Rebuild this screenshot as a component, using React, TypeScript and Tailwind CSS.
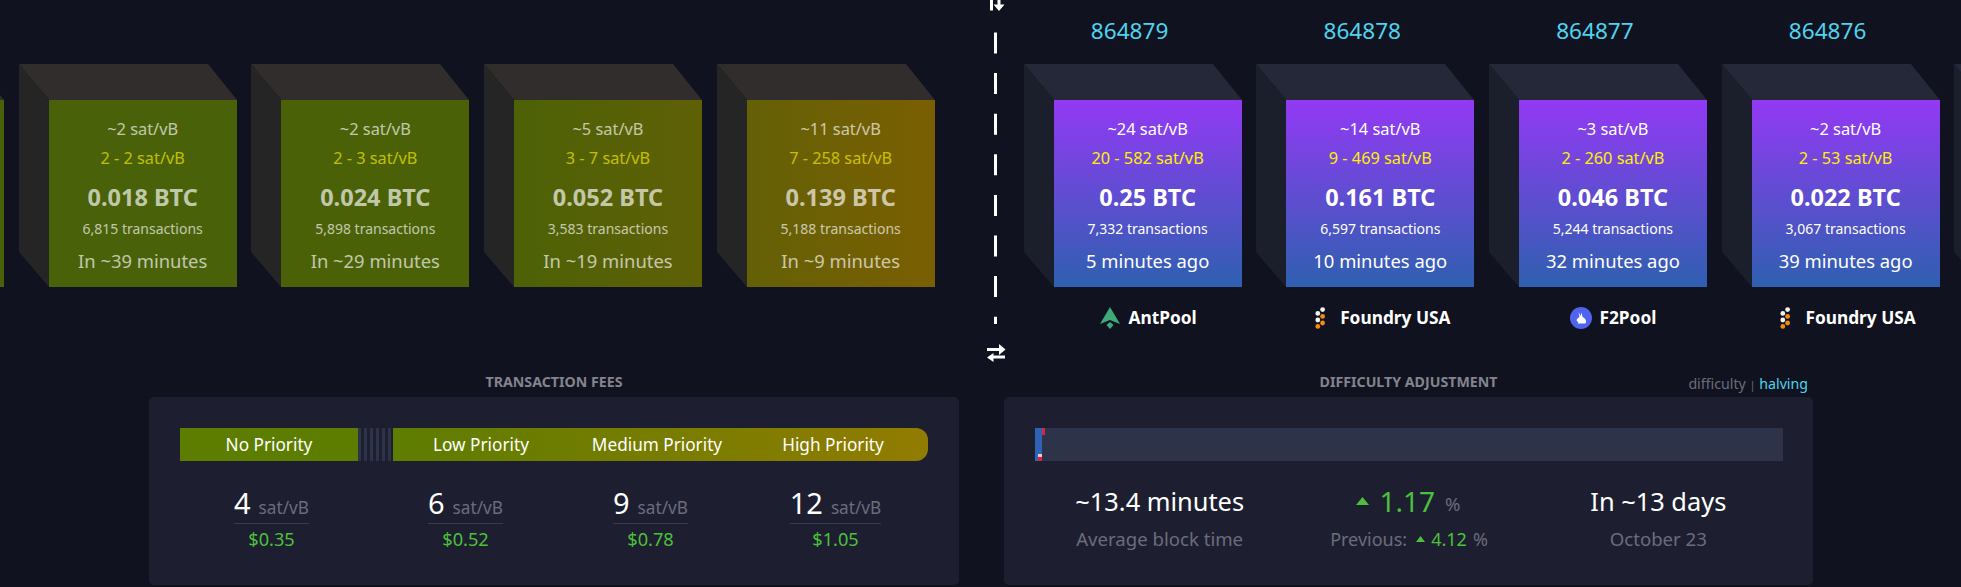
const mempoolBlocks = [
  { key: "next-5", front: "bg-[#496109]" },
  { key: "next-4", front: "bg-[#496109]", fee: "~2 sat/vB", range: "2 - 2 sat/vB", btc: "0.018 BTC", txs: "6,815 transactions", time: "In ~39 minutes" },
  { key: "next-3", front: "bg-[#4a6107]", fee: "~2 sat/vB", range: "2 - 3 sat/vB", btc: "0.024 BTC", txs: "5,898 transactions", time: "In ~29 minutes" },
  { key: "next-2", front: "bg-[linear-gradient(90deg,#4d6106,#5f6006)]", fee: "~5 sat/vB", range: "3 - 7 sat/vB", btc: "0.052 BTC", txs: "3,583 transactions", time: "In ~19 minutes" },
  { key: "next-1", front: "bg-[linear-gradient(90deg,#646006,#7a5f02)]", fee: "~11 sat/vB", range: "7 - 258 sat/vB", btc: "0.139 BTC", txs: "5,188 transactions", time: "In ~9 minutes" },
];

const minedBlocks = [
  { height: "864879", fee: "~24 sat/vB", range: "20 - 582 sat/vB", btc: "0.25 BTC", txs: "7,332 transactions", time: "5 minutes ago", pool: "AntPool" },
  { height: "864878", fee: "~14 sat/vB", range: "9 - 469 sat/vB", btc: "0.161 BTC", txs: "6,597 transactions", time: "10 minutes ago", pool: "Foundry USA" },
  { height: "864877", fee: "~3 sat/vB", range: "2 - 260 sat/vB", btc: "0.046 BTC", txs: "5,244 transactions", time: "32 minutes ago", pool: "F2Pool" },
  { height: "864876", fee: "~2 sat/vB", range: "2 - 53 sat/vB", btc: "0.022 BTC", txs: "3,067 transactions", time: "39 minutes ago", pool: "Foundry USA" },
];

const fees = [
  { rate: "4", usd: "$0.35" },
  { rate: "6", usd: "$0.52" },
  { rate: "9", usd: "$0.78" },
  { rate: "12", usd: "$1.05" },
];

function PoolIcon({ pool }: { pool: string }) {
  if (pool === "AntPool") {
    return (
      <svg width="22" height="22" viewBox="0 0 22 22" fill="#3fa97b">
        <path d="M11 0 L21 17 L11 13 L1 17 Z" />
        <path d="M11 15 L14.5 18 L11 22 L7.5 18 Z" />
      </svg>
    );
  }
  if (pool === "F2Pool") {
    return (
      <svg width="22" height="22" viewBox="0 0 22 22">
        <circle cx="11" cy="11" r="11" fill="#4f63ee" />
        <path d="M8.5 5 L10.5 9 L11.5 5.5 L12.5 10 C15.5 11.5 17 14 15.5 16.5 L7.5 16.5 L8.5 15 C6.5 14.5 6 12.5 7.5 11.5 L9.5 10 Z" fill="#fff" />
      </svg>
    );
  }
  return (
    <svg width="22" height="22" viewBox="0 0 22 22">
      <circle cx="12.6" cy="2.6" r="2.4" fill="#f1f1f1" />
      <circle cx="7.8" cy="6.4" r="2.4" fill="#f1f1f1" />
      <circle cx="12.6" cy="9.4" r="2.4" fill="#f28c0f" />
      <circle cx="7.8" cy="13" r="2.4" fill="#f1f1f1" />
      <circle cx="12.6" cy="16" r="2.4" fill="#f28c0f" />
      <circle cx="7.8" cy="19.4" r="2.4" fill="#f28c0f" />
    </svg>
  );
}

function CubeFaces({ top, side }: { top: string; side: string }) {
  return (
    <svg className="absolute left-0 top-0" width="218" height="223" viewBox="0 0 218 223">
      <polygon points="0,0 189,0 218,36 30,36" fill={top} />
      <polygon points="0,0 30,36 30,223 0,188" fill={side} />
    </svg>
  );
}

function BlockBody(props: { fee?: string; range?: string; btc?: string; txs?: string; time?: string }) {
  if (!props.fee) return null;
  return (
    <div className="flex flex-col items-center">
      <div className="mt-[17px] h-6 text-[16.4px] leading-6">{props.fee}</div>
      <div className="mt-[5px] h-6 text-[16.3px] leading-6 text-[#fff000]">{props.range}</div>
      <div className="mt-3 h-[30px] text-[23.5px] font-bold leading-[30px]">{props.btc}</div>
      <div className="mt-[7px] h-5 text-[14px] leading-5">{props.txs}</div>
      <div className="mt-[9px] h-[26px] text-[18.4px] leading-[26px]">{props.time}</div>
    </div>
  );
}

function ExchangeIcon({ className }: { className: string }) {
  return (
    <svg className={className} width="20" height="19" viewBox="0 0 20 19" fill="#fff">
      <path d="M1 5 H13 V1 L19.5 6.5 L13 12 V8 H1 Z" />
      <path d="M19 12.5 H7.5 V10 L1 14.5 L7.5 19 V15.5 H19 Z" />
    </svg>
  );
}

function Divider() {
  return (
    <>
      <svg className="absolute left-[987px] top-0" width="20" height="330" viewBox="0 0 20 330">
        <line x1="8.5" y1="32.5" x2="8.5" y2="324" stroke="#fff" strokeWidth="3" strokeDasharray="21 19.6" />
      </svg>
      <ExchangeIcon className="absolute left-[986px] top-[-8px] rotate-90" />
      <ExchangeIcon className="absolute left-[986px] top-[343px]" />
    </>
  );
}

export default function App() {
  return (
    <div className="relative h-[587px] w-[1961px] overflow-hidden bg-[#11121f] font-['Noto_Sans',sans-serif] text-white">
      <Divider />

      {/* blockchain row */}
      <div className="-ml-[214px] flex h-[370px]">
        <div className="flex gap-[14.67px]">
          {mempoolBlocks.map((b) => (
            <div key={b.key} className="w-[218px] pt-16">
              <div className="relative h-[223px] pl-[30px] pt-9">
                <CubeFaces top="#302d2c" side="#252525" />
                <div className={`relative h-[187px] w-[188px] ${b.front}`}>
                  <div className="opacity-65">
                    <BlockBody {...b} />
                  </div>
                </div>
              </div>
            </div>
          ))}
        </div>

        <div className="ml-[89px] flex gap-[14.67px]">
          {minedBlocks.map((b) => (
            <div key={b.height} className="w-[218px]">
              <div className="flex h-16 items-start justify-center pr-[6px] pt-[14px] text-[22.6px] leading-[34px] text-[#4fd3ee]">
                {b.height}
              </div>
              <div className="relative h-[223px] pl-[30px] pt-9">
                <CubeFaces top="#252838" side="#1b1e2b" />
                <div className="relative h-[187px] w-[188px] bg-[linear-gradient(#9339f4,#2e60b0)]">
                  <BlockBody {...b} />
                </div>
              </div>
              <div className="ml-[30px] mt-5 flex h-[22px] w-[188px] items-center justify-center gap-2">
                <PoolIcon pool={b.pool} />
                <span className="whitespace-nowrap text-[17.3px] font-bold leading-[22px]">{b.pool}</span>
              </div>
            </div>
          ))}
          <div className="w-[218px] pt-16">
            <div className="relative h-[223px]">
              <CubeFaces top="#252838" side="#1b1e2b" />
            </div>
          </div>
        </div>
      </div>

      {/* stats row */}
      <div className="ml-[149px] flex gap-[45px]">
        <div className="w-[810px]">
          <h5 className="h-[27px] text-center text-[14.2px] font-bold uppercase leading-[24px] text-[#83848d]">
            Transaction Fees
          </h5>
          <div className="h-[188px] rounded-[5px] bg-[#1d1f31] pl-[31px] pt-[31px]">
            <div className="flex h-[33px] w-[748px] text-[17.2px] leading-[33px]">
              <div className="w-[178px] bg-[#5d7d01] text-center">No Priority</div>
              <div className="w-[35px] bg-[repeating-linear-gradient(90deg,#2d3348_0,#2d3348_3px,#1d1f31_3px,#1d1f31_6px)]" />
              <div className="grid w-[535px] grid-cols-3 rounded-r-[12px] bg-[linear-gradient(90deg,#5d7d01,#917c00)] pr-[7px] text-center">
                <div>Low Priority</div>
                <div>Medium Priority</div>
                <div>High Priority</div>
              </div>
            </div>
            <div className="mt-[26px] grid grid-cols-[183px_205px_165px_205px]">
              {fees.map((f) => (
                <div key={f.rate} className="flex flex-col items-center">
                  <div className="flex h-[37px] items-baseline gap-[8px] border-b border-[#393b4d] leading-[32px]">
                    <span className="text-[29px]">{f.rate}</span>
                    <span className="text-[17.2px] text-[#6b6c7c]">sat/vB</span>
                  </div>
                  <div className="mt-[3px] text-[18.2px] leading-6 text-[#4cc03a]">{f.usd}</div>
                </div>
              ))}
            </div>
          </div>
        </div>

        <div className="w-[809px]">
          <div className="relative h-[27px] text-center">
            <h5 className="text-[14.2px] font-bold uppercase leading-[24px] text-[#83848d]">Difficulty Adjustment</h5>
            <div className="absolute right-[5px] top-0 text-[14.2px] leading-[27px] text-[#6b6c7c]">
              difficulty <span className="text-[11px]">|</span> <span className="text-[#4fd3ee]">halving</span>
            </div>
          </div>
          <div className="h-[188px] rounded-[5px] bg-[#1d1f31] pl-[31px] pt-[31px]">
            <div className="relative h-[33px] w-[748px] bg-[#2d3348]">
              <div className="h-full w-[7px] bg-[#2e62b5]" />
              <div className="absolute left-[7px] top-0 h-[7px] w-[3px] bg-[#d7263d]" />
              <div className="absolute bottom-0 left-[3px] h-[7px] w-1 bg-[#d7263d]" />
              <div className="absolute bottom-[4px] left-[3px] h-[3px] w-1 bg-[#f5c6d0]" />
            </div>
            <div className="mt-[22px] grid w-[748px] grid-cols-3 text-center">
              <div>
                <div className="h-[36px] text-[25.4px] leading-[36px]">~13.4 minutes</div>
                <div className="mt-2 text-[18.6px] leading-6 text-[#6b6c7c]">Average block time</div>
              </div>
              <div>
                <div className="flex h-[36px] items-center justify-center gap-[10px] pr-[1px]">
                  <svg width="13" height="8" viewBox="0 0 13 8" fill="#4cc03a">
                    <path d="M6.5 0 L13 8 H0 Z" />
                  </svg>
                  <span className="text-[28px] leading-[36px] text-[#4cc03a]">1.17</span>
                  <span className="mt-[6px] text-[18.6px] text-[#6b6c7c]">%</span>
                </div>
                <div className="mt-2 flex h-6 items-center justify-center gap-[6px] text-[18px] leading-6 text-[#6b6c7c]">
                  <span className="mr-[3px]">Previous:</span>
                  <svg width="9" height="6" viewBox="0 0 9 6" fill="#4cc03a">
                    <path d="M4.5 0 L9 6 H0 Z" />
                  </svg>
                  <span className="text-[#4cc03a]">4.12</span>
                  <span>%</span>
                </div>
              </div>
              <div>
                <div className="h-[36px] text-[25.4px] leading-[36px]">In ~13 days</div>
                <div className="mt-2 text-[18.6px] leading-6 text-[#6b6c7c]">October 23</div>
              </div>
            </div>
          </div>
        </div>
      </div>
    </div>
  );
}
